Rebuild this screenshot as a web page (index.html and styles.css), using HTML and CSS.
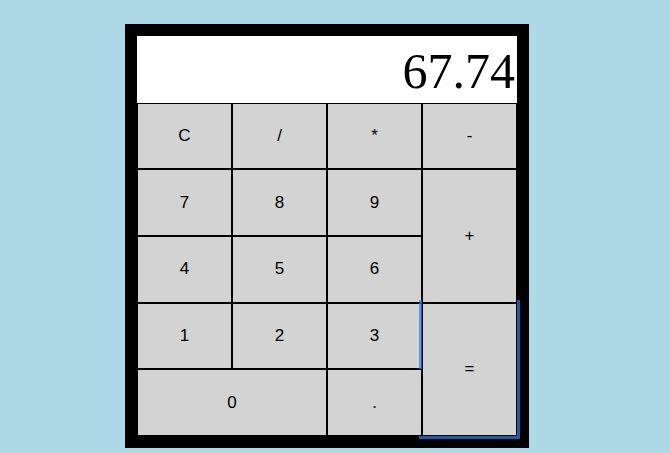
FILE: index.html
```html
<!DOCTYPE html>
<html>
<head>
<meta charset="utf-8">
<link rel="stylesheet" href="styles.css">
</head>
<body>
<div class="calc">
  <div class="display">67.74</div>
  <button class="key">C</button>
  <button class="key">/</button>
  <button class="key">*</button>
  <button class="key">-</button>
  <button class="key">7</button>
  <button class="key">8</button>
  <button class="key">9</button>
  <button class="key">4</button>
  <button class="key">5</button>
  <button class="key">6</button>
  <button class="key">1</button>
  <button class="key">2</button>
  <button class="key">3</button>
  <button class="key key-eq focused">=</button>
  <button class="key key-plus">+</button>
  <button class="key key-zero">0</button>
  <button class="key key-dot">.</button>
</div>
</body>
</html>
```
FILE: styles.css
```css
html, body {
  margin: 0;
  padding: 0;
  background: #add8e6;
}
body {
  padding: 24px 0 0 125px;
}
.calc {
  width: 380px;
  height: 400px;
  padding: 12px;
  background: #000;
  display: grid;
  grid-template-columns: repeat(4, 95px);
  grid-template-rows: repeat(6, 1fr);
}
.display {
  grid-column: 1 / span 4;
  background: #fff;
  font-family: "Liberation Serif", "Times New Roman", serif;
  font-size: 50px;
  line-height: 1;
  display: flex;
  align-items: center;
  justify-content: flex-end;
  padding: 3px 2px 0 0;
}
.key {
  margin: 0;
  border: 1px solid #000;
  border-radius: 0;
  background: #d3d3d3;
  color: #000;
  font-family: "Liberation Sans", Arial, sans-serif;
  font-size: 17px;
  padding: 0;
}
.key-plus {
  grid-column: 4;
  grid-row: 3 / span 2;
}
.key-eq {
  grid-column: 4;
  grid-row: 5 / span 2;
}
.key-zero {
  grid-column: 1 / span 2;
  grid-row: 6;
}
.key-dot {
  grid-column: 3;
  grid-row: 6;
}
.focused {
  outline: 3px solid rgba(40, 130, 240, 0.7);
  outline-offset: 0;
}
```
